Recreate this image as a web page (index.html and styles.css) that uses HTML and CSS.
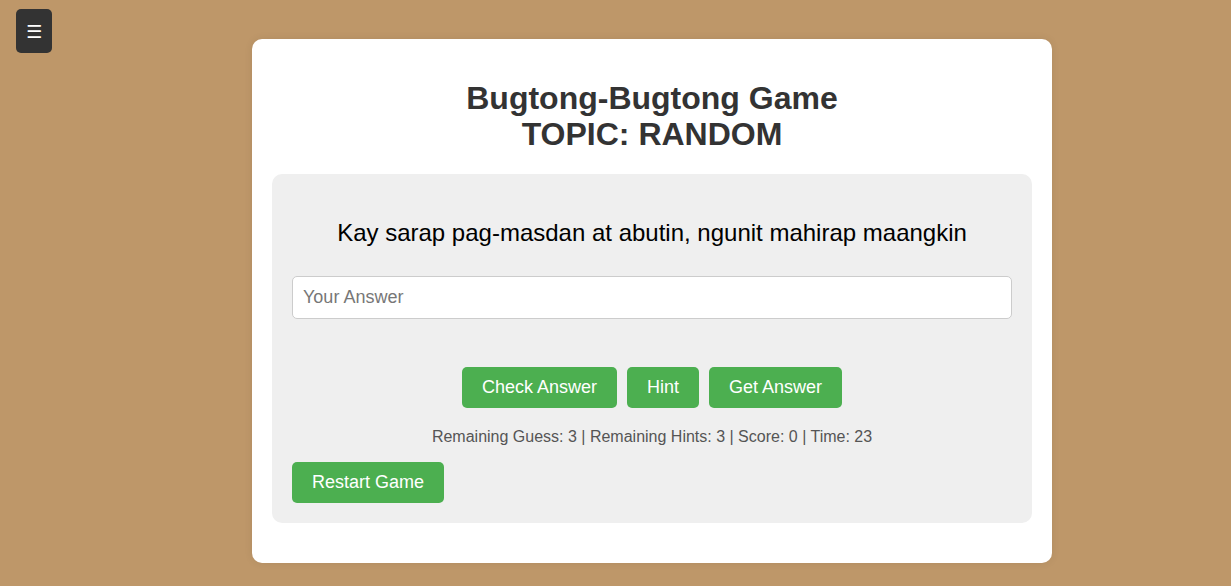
FILE: index.html
```html
<!DOCTYPE html>
<html lang="tl">
<head>
<meta charset="utf-8">
<title>Bugtong-Bugtong Game</title>
<link rel="stylesheet" href="styles.css">
</head>
<body>
<button class="menu-btn" type="button">&#9776;</button>
<main class="card">
  <h1 class="title">Bugtong-Bugtong Game<br>TOPIC: RANDOM</h1>
  <section class="panel">
    <p class="riddle">Kay sarap pag-masdan at abutin, ngunit mahirap maangkin</p>
    <input class="answer" type="text" placeholder="Your Answer">
    <div class="actions">
      <button class="btn" type="button">Check Answer</button>
      <button class="btn" type="button">Hint</button>
      <button class="btn" type="button">Get Answer</button>
    </div>
    <p class="stats">Remaining Guess: 3 | Remaining Hints: 3 | Score: 0 | Time: 23</p>
    <div class="restart-row">
      <button class="btn" type="button">Restart Game</button>
    </div>
  </section>
</main>
</body>
</html>
```

FILE: styles.css
```css
html, body {
  margin: 0;
  padding: 0;
}
body {
  background: #be9769;
  font-family: "Liberation Sans", Arial, sans-serif;
  min-height: 586px;
  display: flex;
  justify-content: center;
  align-items: flex-start;
  padding: 39px 0 0 73px;
  box-sizing: border-box;
}
.menu-btn {
  position: absolute;
  left: 16px;
  top: 9px;
  width: 36px;
  height: 44px;
  background: #333;
  color: #fff;
  border: none;
  border-radius: 5px;
  font-size: 18px;
  font-family: "DejaVu Sans", sans-serif;
  padding: 0;
  cursor: pointer;
}
.card {
  width: 800px;
  box-sizing: border-box;
  background: #fff;
  border-radius: 10px;
  padding: 20px 20px 40px;
  box-shadow: 0 0 8px rgba(0, 0, 0, 0.08);
}
.title {
  margin: 21px 0 22px;
  text-align: center;
  font-size: 32px;
  line-height: 36px;
  font-weight: bold;
  color: #333;
}
.panel {
  background: #efefef;
  border-radius: 10px;
  padding: 20px;
  display: flex;
  flex-direction: column;
}
.riddle {
  margin: 24px 0 28px;
  text-align: center;
  font-size: 24px;
  line-height: 30px;
  color: #000;
}
.answer {
  height: 43px;
  box-sizing: border-box;
  padding: 10px;
  border: 1px solid #ccc;
  border-radius: 5px;
  background: #fff;
  font-family: "Liberation Sans", Arial, sans-serif;
  font-size: 18px;
  color: #333;
}
.answer::placeholder {
  color: #777;
}
.actions {
  display: flex;
  justify-content: center;
  gap: 10px;
  margin-top: 48px;
}
.btn {
  height: 41px;
  padding: 0 20px;
  background: #4caf50;
  color: #fff;
  border: none;
  border-radius: 5px;
  font-family: "Liberation Sans", Arial, sans-serif;
  font-size: 18px;
  cursor: pointer;
}
.stats {
  margin: 20px 0 16px;
  text-align: center;
  font-size: 16px;
  line-height: 18px;
  color: #555;
}
.restart-row {
  display: flex;
}
```
